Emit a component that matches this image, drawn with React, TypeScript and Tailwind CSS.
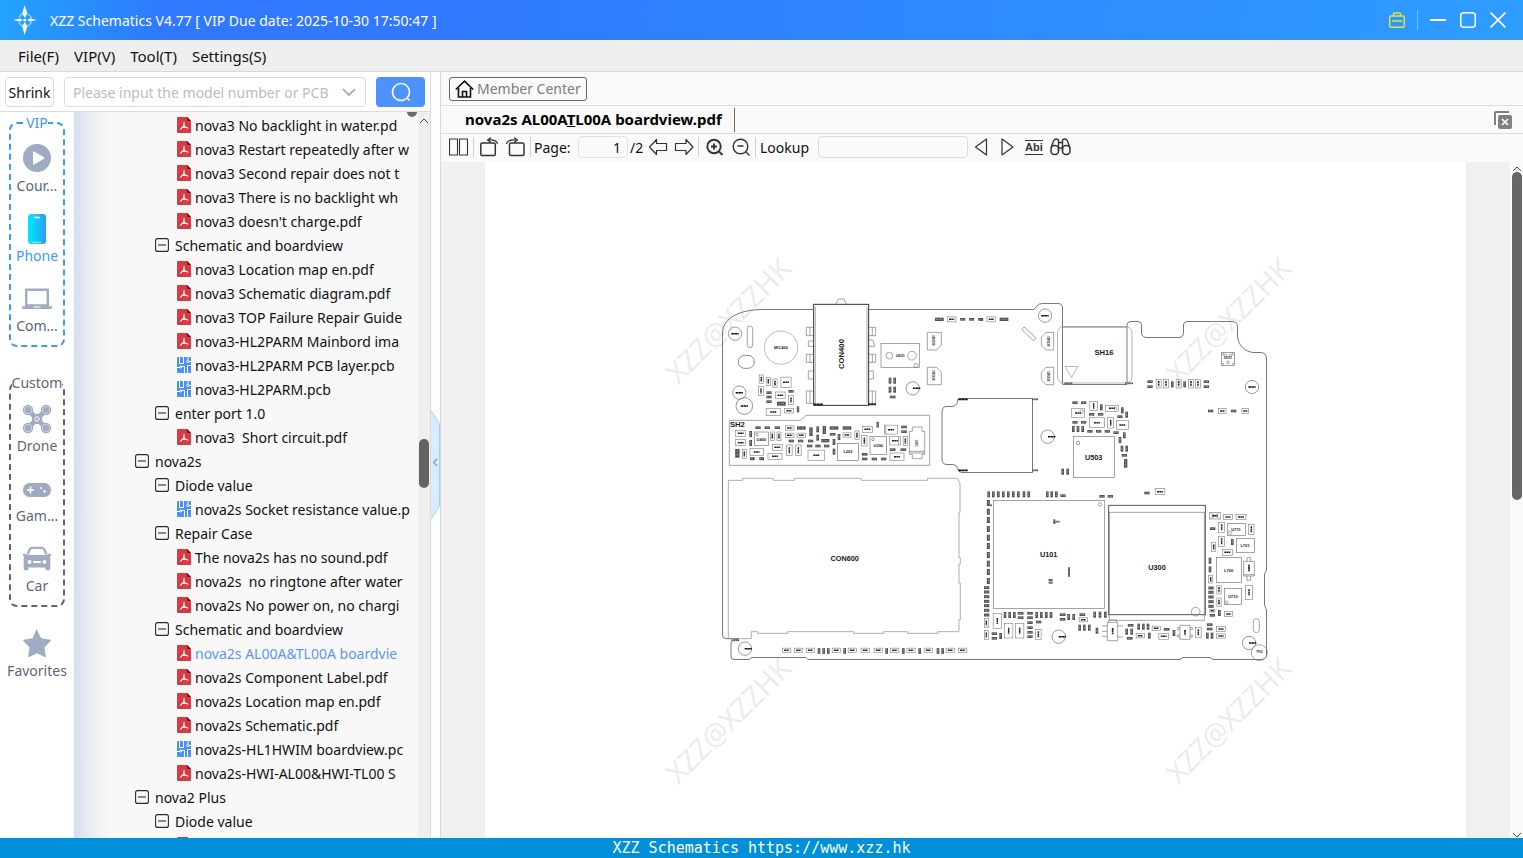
import React from "react";

type Box = [number, number, number, number];

/* ---------- tree data ---------- */

type Row = { kind: "root" | "dir" | "pdf" | "pcb"; text: string; active?: boolean };

const rows: Row[] = [
  { kind: "pdf", text: "nova3 No backlight in water.pd" },
  { kind: "pdf", text: "nova3 Restart repeatedly after w" },
  { kind: "pdf", text: "nova3 Second repair does not t" },
  { kind: "pdf", text: "nova3 There is no backlight wh" },
  { kind: "pdf", text: "nova3 doesn't charge.pdf" },
  { kind: "dir", text: "Schematic and boardview" },
  { kind: "pdf", text: "nova3 Location map en.pdf" },
  { kind: "pdf", text: "nova3 Schematic diagram.pdf" },
  { kind: "pdf", text: "nova3 TOP Failure Repair Guide" },
  { kind: "pdf", text: "nova3-HL2PARM Mainbord ima" },
  { kind: "pcb", text: "nova3-HL2PARM PCB layer.pcb" },
  { kind: "pcb", text: "nova3-HL2PARM.pcb" },
  { kind: "dir", text: "enter port 1.0" },
  { kind: "pdf", text: "nova3  Short circuit.pdf" },
  { kind: "root", text: "nova2s" },
  { kind: "dir", text: "Diode value" },
  { kind: "pcb", text: "nova2s Socket resistance value.p" },
  { kind: "dir", text: "Repair Case" },
  { kind: "pdf", text: "The nova2s has no sound.pdf" },
  { kind: "pdf", text: "nova2s  no ringtone after water" },
  { kind: "pdf", text: "nova2s No power on, no chargi" },
  { kind: "dir", text: "Schematic and boardview" },
  { kind: "pdf", text: "nova2s AL00A&TL00A boardvie", active: true },
  { kind: "pdf", text: "nova2s Component Label.pdf" },
  { kind: "pdf", text: "nova2s Location map en.pdf" },
  { kind: "pdf", text: "nova2s Schematic.pdf" },
  { kind: "pcb", text: "nova2s-HL1HWIM boardview.pc" },
  { kind: "pdf", text: "nova2s-HWI-AL00&HWI-TL00 S" },
  { kind: "root", text: "nova2 Plus" },
  { kind: "dir", text: "Diode value" },
  { kind: "pdf", text: "" },
];

function MinusBox() {
  return (
    <svg width="14" height="14" viewBox="0 0 14 14" fill="none" stroke="#2b2b2b" className="shrink-0">
      <rect x="0.6" y="0.6" width="12.8" height="12.8" rx="2" strokeWidth="1.1" />
      <path d="M3 7H11" strokeWidth="1.1" />
    </svg>
  );
}

function PdfIcon() {
  return (
    <svg width="14" height="16" viewBox="0 0 14 16" className="shrink-0">
      <path d="M1 0H10L14 4V15A1 1 0 0 1 13 16H1A1 1 0 0 1 0 15V1A1 1 0 0 1 1 0Z" fill="#d63a42" />
      <path d="M10 0V3A1 1 0 0 0 11 4H14Z" fill="#7d0d12" />
      <path d="M7 5.2C7.6 8 7 9.6 3.6 12.2M7.2 8.6C8 9.8 9 10.6 10.6 11M4.6 10.8C6.4 10.2 8 10 10.8 10.8" fill="none" stroke="#fff" strokeWidth="1.1" strokeLinecap="round" />
    </svg>
  );
}

function PcbIcon() {
  return (
    <svg width="14" height="16" viewBox="0 0 14 16" className="shrink-0">
      <rect width="14" height="16" rx="1" fill="#4a90f5" />
      <g fill="none" stroke="#fff" strokeWidth="1">
        <path d="M2.500 0V6.500H6.500V0M11 3.500V0M12 4.500H14M0 10.500H3M4.500 9.500H7.500V16M10.500 16V8.500H14" />
        <circle cx="3.700" cy="10" r="1" />
        <circle cx="10.800" cy="4.500" r="1.100" />
      </g>
    </svg>
  );
}

function TreeRow({ row }: { row: Row }) {
  const file = row.kind === "pdf" || row.kind === "pcb";
  const pad = row.kind === "root" ? "pl-[61px] gap-1.5" : row.kind === "dir" ? "pl-[81px] gap-1.5" : "pl-[103px] gap-1";
  return (
    <li>
      <button type="button" className={"flex h-6 w-full items-center whitespace-pre text-left " + pad + (row.active ? " text-[#5b97f5]" : " text-[#111]")}>
        {file ? row.kind === "pdf" ? <PdfIcon /> : <PcbIcon /> : <MinusBox />}
        <span>{row.text}</span>
      </button>
    </li>
  );
}

/* ---------- category bar ---------- */

const navIcons: Record<string, React.ReactNode> = {
  course: (
    <>
      <circle cx="14" cy="14" r="14" fill="#a0aac0" />
      <path d="M10 8.2V19.8A0.8 0.8 0 0 0 11.2 20.4L21 14.7A0.8 0.8 0 0 0 21 13.3L11.2 7.6A0.8 0.8 0 0 0 10 8.2Z" fill="#fff" />
    </>
  ),
  phone: (
    <>
      <defs>
        <linearGradient id="phoneFill" x1="0" x2="1" y1="0" y2="0">
          <stop offset="0" stopColor="#00eaff" />
          <stop offset="1" stopColor="#2a9bfa" />
        </linearGradient>
      </defs>
      <rect x="5" y="0" width="18" height="30" rx="3" fill="url(#phoneFill)" />
      <path d="M11.5 3.5H16.5" stroke="#fff" strokeWidth="1.4" strokeLinecap="round" />
      <path d="M9.5 28.3H18.5" stroke="#bdeaff" strokeWidth="1" />
    </>
  ),
  computer: (
    <>
      <path d="M3.2 5.8H24.8V21.5H3.2Z" fill="none" stroke="#a0aac0" strokeWidth="2.4" strokeLinejoin="round" />
      <path d="M-1 22.2H29V23.4A1.6 1.6 0 0 1 27.4 25H0.6A1.6 1.6 0 0 1 -1 23.4Z" fill="#a0aac0" />
      <path d="M10.5 23H17.5" stroke="#fff" strokeWidth="1" />
    </>
  ),
  drone: (
    <>
      <path d="M6 7L22 23M22 7L6 23" stroke="#a0aac0" strokeWidth="4.6" />
      <rect x="9" y="10" width="10" height="10" rx="3" fill="#a0aac0" />
      {[[5, 6], [23, 6], [5, 24], [23, 24]].map(([x, y]) => (
        <g key={x + "-" + y}>
          <circle cx={x} cy={y} r="5.2" fill="#a0aac0" />
          <circle cx={x} cy={y} r="3.7" fill="none" stroke="#dde1ea" strokeWidth="0.7" />
        </g>
      ))}
      <circle cx="14" cy="15" r="2.2" fill="none" stroke="#fff" strokeWidth="1" />
    </>
  ),
  game: (
    <>
      <rect x="0" y="9" width="28" height="14" rx="6.5" fill="#a0aac0" />
      <path d="M7.5 12.5V19.5M4 16H11" stroke="#fff" strokeWidth="1.6" />
      <circle cx="18.2" cy="14" r="1" fill="#fff" />
      <circle cx="21.6" cy="17.4" r="1.2" fill="#fff" />
    </>
  ),
  car: (
    <g transform="translate(0 1)">
      <path d="M4.5 9.5L6.7 4.5A3 3 0 0 1 9.4 2.9H18.6A3 3 0 0 1 21.3 4.5L23.5 9.5" fill="none" stroke="#a0aac0" strokeWidth="2.2" />
      <path d="M0 8.7H3L3.6 10H24.4L25 8.7H28V11H26.6Q27.3 12 27.3 14V24A1.2 1.2 0 0 1 26.1 25.2H23.6A1.2 1.2 0 0 1 22.4 24V22.5H5.6V24A1.2 1.2 0 0 1 4.4 25.2H1.9A1.2 1.2 0 0 1 0.7 24V14Q0.7 12 1.4 11H0Z" fill="#a0aac0" />
      <circle cx="6.5" cy="17" r="2" fill="#fff" />
      <circle cx="21.5" cy="17" r="2" fill="#fff" />
      <path d="M11 17H17" stroke="#fff" strokeWidth="2" strokeLinecap="round" />
    </g>
  ),
  star: (
    <path d="M14 1.2L18.2 9.3L27.2 10.7Q28.4 11 27.6 12.1L21.4 18.5L22.8 27Q22.8 28.4 21.6 28L14 24.2L6.4 28Q5.2 28.4 5.2 27L6.6 18.5L0.4 12.1Q-0.4 11 0.8 10.7L9.8 9.3L13 1.2Q14 -0.4 15 1.2Z" fill="#a0aac0" />
  ),
};

function NavItem({ icon, label, active }: { icon: string; label: string; active?: boolean }) {
  return (
    <button type="button" className={"flex flex-col items-center whitespace-nowrap " + (active ? "text-[#3b9cf2]" : "text-[#5b6678]")}>
      <svg width="28" height="28" viewBox="0 0 28 28" className="overflow-visible">{navIcons[icon]}</svg>
      <span className="mt-0.5 leading-6">{label}</span>
    </button>
  );
}

/* ---------- board drawing ---------- */

/* Solid parts: centre x, centre y, width, height */
function Solid({ list }: { list: Box[] }) {
  return (
    <g stroke="#505050">
      {list.map(([x, y, w, h], i) =>
        w >= h ? (
          <g key={i}>
            <path d={`M${x - w / 2} ${y}H${x + w / 2}`} strokeWidth={h} />
            <path d={`M${x - w / 2 + 3} ${y}H${x + w / 2 - 3}`} stroke="#d0d0d0" strokeWidth="2.4" strokeDasharray="2 2" />
          </g>
        ) : (
          <g key={i}>
            <path d={`M${x} ${y - h / 2}V${y + h / 2}`} strokeWidth={w} />
            <path d={`M${x} ${y - h / 2 + 3}V${y + h / 2 - 3}`} stroke="#d0d0d0" strokeWidth="2.4" strokeDasharray="2 2" />
          </g>
        )
      )}
    </g>
  );
}

/* Outlined parts with a tiny designator mark inside */
function Open({ list }: { list: Box[] }) {
  return (
    <g fill="none" stroke="#8a8a8a" strokeWidth="2">
      {list.map(([x, y, w, h], i) => {
        const l = Math.min(Math.max(w, h) * 0.3, 9);
        return (
          <g key={i}>
            <rect x={x - w / 2} y={y - h / 2} width={w} height={h} />
            <path d={w >= h ? `M${x - l} ${y}H${x + l}` : `M${x} ${y - l}V${y + l}`} stroke="#222" strokeWidth="4.5" strokeDasharray="6 1" />
          </g>
        );
      })}
    </g>
  );
}

function Hole({ x, y, r, dx = 0 }: { x: number; y: number; r: number; dx?: number }) {
  return (
    <g fill="none" stroke="#666" strokeWidth="2">
      <circle cx={x} cy={y} r={r} />
      <path d={`M${x - 11 + dx} ${y}H${x + 11 + dx}`} stroke="#111" strokeWidth="4.5" strokeDasharray="8 1" />
    </g>
  );
}

function Tag({ x, y, s, children, turn }: { x: number; y: number; s: number; children: string; turn?: boolean }) {
  return (
    <text x={x} y={y} fontSize={s} dominantBaseline="central" textAnchor="middle" transform={turn ? `rotate(-90 ${x} ${y})` : undefined} fill="#1c1c1c" fontWeight="700">
      {children}
    </text>
  );
}

const H = (y: number, xs: number[], w = 17, h = 8): Box[] => xs.map((x) => [x, y, w, h]);
const V = (y: number, xs: number[], w = 8, h = 18): Box[] => xs.map((x) => [x, y, w, h]);
const col = (x: number, ys: number[], w: number, h: number): Box[] => ys.map((y) => [x, y, w, h]);

const solidNW: Box[] = [
  [688, 88, 26, 10], ...H(88, [758, 785, 812], 15),
  ...col(177, [308, 321, 335], 16, 8), [243, 304, 16, 8], [264, 358, 7, 18], [214, 341, 26, 12],
  ...V(272, [540, 554]), ...V(299, [540, 554]), [548, 321, 17, 8],
  ...H(413, [144, 172, 202], 16), ...V(432, [122]), ...V(459, [122]),
  ...H(414, [274, 372, 411], 26, 10), [303, 425, 10, 26], ...V(418, [323]), [343, 420, 10, 24], ...H(433, [368]), ...V(443, [323]),
  ...H(453, [244, 272, 302], 16), [346, 452, 24, 10], ...V(456, [372]), ...H(468, [299, 324, 350], 16), ...V(485, [372]),
  ...V(441, [387]), [503, 404, 7, 17], ...H(411, [582]), ...H(425, [582]), ...H(479, [548, 580]),
  ...H(493, [464]), ...H(507, [464, 493, 521], 16), ...H(506, [127, 155], 14, 9), [82, 490, 13, 26],
];
const openNW: Box[] = [
  [725, 88, 26, 15],
  [154, 268, 13, 26], [175, 274, 13, 24], [195, 280, 13, 26], [228, 277, 31, 31], [153, 303, 14, 26],
  [211, 316, 29, 20], [243, 330, 16, 26], [190, 366, 43, 22], [237, 362, 26, 14],
  [92, 430, 30, 18], [92, 458, 30, 18], [103, 492, 12, 26], [187, 439, 12, 26], [207, 439, 12, 26], [202, 472, 29, 18],
  [140, 486, 40, 22], [195, 499, 42, 18], [239, 414, 26, 13], [239, 436, 26, 13], [274, 436, 26, 13], [238, 481, 17, 32], [265, 481, 17, 32],
  [319, 496, 50, 31], [411, 435, 24, 13], [441, 436, 13, 26], [463, 452, 16, 32], [472, 418, 30, 18],
  [543, 419, 38, 27], [555, 452, 34, 26], [586, 453, 13, 26], [561, 500, 42, 22],
];
const solidNE: Box[] = [
  ...H(88, [4], 10), [72, 88, 26, 10],
  ...H(275, [510, 679], 16), ...H(290, [510, 679], 16), ...V(283, [577, 614]),
  ...H(363, [692, 761], 16),
  ...H(338, [285, 311], 16), ...V(352, [364]), ...V(361, [427]), ...V(374, [440]),
  ...H(373, [335, 362], 16), ...H(380, [420], 16), ...H(397, [285, 311], 16), ...V(417, [280, 294, 308]),
  ...H(424, [330, 356, 382], 16), ...H(428, [408], 16), ...V(436, [433]), ...V(450, [420]), ...V(476, [426, 440]),
  ...H(496, [433], 16), [437, 520, 10, 26], ...V(545, [248, 263]),
  ...H(280, [265, 447], 24, 5), ...H(328, [165], 18, 5), ...H(541, [165], 18, 5),
];
const openNE: Box[] = [
  [34, 88, 26, 15], ...V(281, [536, 558, 596, 633, 654], 15, 26), [727, 363, 22, 15], [796, 363, 20, 15],
  [294, 369, 38, 27], [341, 348, 23, 28], [396, 355, 40, 18], [351, 398, 45, 30], [392, 398, 18, 32], [427, 405, 36, 26],
];
const solidS: Box[] = [
  ...V(543, [327, 341, 355, 404, 530, 580, 629, 684, 698], 8, 17),
  [76, 511, 22, 5],
];
const openS: Box[] = H(541, [230, 266, 301, 379, 427, 466, 505, 554, 603, 655, 721, 758], 25, 13);
const solidSE: Box[] = [
  ...V(43, [26, 40, 55, 70, 85, 100, 115, 132, 146, 202, 215, 229]), ...H(47, [249], 16), ...H(49, [366, 391], 16),
  ...col(25, [69, 95, 120, 147, 173, 198, 225, 251, 276, 303], 9, 18), [30, 76, 12, 5],
  ...col(20, [323, 336, 350, 364, 377, 391, 405], 16, 9),
  ...V(405, [75, 89, 103]), ...H(400, [122, 150]), ...H(413, [122, 150]), ...V(405, [170, 184, 199, 213]),
  ...col(150, [428, 443, 457, 470], 16, 8), ...H(426, [176], 16), ...H(461, [43], 16), ...H(475, [43], 16), ...V(468, [62]),
  ...H(404, [248, 307]), ...H(418, [248]), ...V(411, [266, 281]), ...V(404, [344, 360, 376]),
  ...V(443, [299, 313, 328]), ...V(452, [351]), ...H(436, [452]), ...V(455, [440, 455]), ...H(475, [449]),
  ...V(440, [476, 490, 504]), ...V(467, [508]), ...H(448, [560]), ...V(459, [582]), [223, 125, 6, 14], [231, 125, 16, 5],
  [267, 276, 6, 28], [212, 300, 12, 6], [212, 308, 12, 6], ...H(39, [501], 16),
  ...H(146, [698], 16), ...V(186, [757]), ...V(242, [690]), ...V(268, [690]),
  ...col(693, [324, 337, 351, 365, 379], 16, 9), ...V(399, [718]), ...H(406, [697], 16), ...H(434, [689]), ...H(447, [689]), ...V(467, [682, 696]),
];
const openSE: Box[] = [
  [540, 35, 29, 18], [52, 423, 25, 44], [86, 452, 25, 44], [119, 452, 25, 44], [19, 429, 12, 26], [19, 465, 12, 26], [175, 463, 17, 30],
  [310, 419, 25, 13], [481, 467, 25, 13], [529, 445, 25, 13], [551, 469, 29, 18], [655, 457, 17, 30],
  [705, 107, 32, 20], [744, 111, 26, 15], [783, 111, 30, 15], [725, 142, 18, 30], [725, 184, 18, 30], [814, 148, 16, 30], [742, 217, 30, 18],
  [701, 201, 12, 26], [692, 298, 12, 22], [717, 329, 13, 26], [717, 367, 13, 26], [807, 337, 21, 42], [697, 392, 15, 8], [746, 402, 24, 16],
  [723, 447, 26, 15], [723, 468, 26, 13],
];

const marks: [number, number][] = [[728, 320], [1228, 320], [728, 720], [1228, 720]];

function Board() {
  return (
    <svg width="981" height="676" viewBox="485 162 981 676" className="max-w-full" fontFamily="'Liberation Sans', Arial, sans-serif" role="img" aria-label="Board view">
      <g fill="#ebebec" fontFamily="'Open Sans', sans-serif" fontSize="28.500">
        {marks.map(([x, y]) => (
          <text key={x + "-" + y} x={x} y={y} textAnchor="middle" dominantBaseline="central" transform={`rotate(-45 ${x} ${y})`}>XZZ@XZZHK</text>
        ))}
      </g>

      <g fill="none" stroke="#555" strokeWidth="0.8">
        <path d="M813 309.500H762C742 309.500 722.500 317 722.500 333V635Q722.500 638.700 726 638.700H739L735 640Q731 640 731 643V656Q731 659.500 734 659.500H749L752 657.500H806L808 659.500H1180L1183 657.500H1210L1213 659.500H1261Q1266 659.500 1266.500 655V610L1264.500 605V574L1266.500 570V359Q1266.500 353 1261 352.500H1254C1245 352.500 1237.500 344 1237.500 336V327Q1237.500 321.500 1232 321.500H1187Q1183.500 321.500 1183.500 325V333Q1183.500 337 1179 337.500H1147Q1142 337.500 1141.500 333V325Q1141.500 321.500 1138 321.500H1131Q1127 321.500 1127 325V384M868 309.500H1034L1037 306Q1039 303.500 1042 303.500H1058Q1062.500 303.500 1062.500 308V384" />
        <path d="M1032.5 398.5H960Q957.5 398.5 957.5 401Q957 406 952 406.5H946Q942 407 942 412V459Q942 464.5 947 464.5H953Q957 465 958 469Q958.5 472.5 962 472.5H1032.5Z" />
        <path d="M1062.5 327H1127M1062.5 384.5H1127" />
      </g>
      <g fill="none" stroke="#999" strokeWidth="0.7">
        <rect x="1057.500" y="326.500" width="74.500" height="56.500" rx="6" />
        <path d="M1065 366.500H1078L1071.500 377.500Z" />
      </g>

      <g transform="translate(710 290) scale(0.33333)" strokeWidth="2">
        <g fill="none" stroke="#777">
          <rect x="112" y="108" width="16" height="65" rx="8" />
          <rect x="85" y="196" width="48" height="39" rx="19" stroke="#555" />
          <circle cx="213" cy="173" r="50" stroke="#999" />
          <path d="M378 42L385 27H402L408 42" />
          <path d="M312 112H289V137H312M300 112V137M312 153L295 153V169H312M312 193H289V217H312M300 193V217M312 243H295V267H312M312 303H289V340H312M300 303V340" />
          <path d="M476 112H497V137H476M487 112V137M476 150H488L494 169H476M476 193H497V217H476M487 193V217M476 243H490V267H476M476 303H497V340H476M487 303V340" />
          <rect x="513" y="160" width="115" height="73" />
          <circle cx="538" cy="197" r="10" />
          <circle cx="606" cy="197" r="13" />
          <circle cx="618" cy="226" r="6" />
          <path d="M652 127H694V165L680 180H652ZM652 284V232H680L694 247V284Z" />
          <path d="M58 391H272L288 376H659V526H58Z" />
          <rect x="133" y="426" width="42" height="40" />
          <circle cx="141" cy="434" r="4" />
          <rect x="382" y="460" width="64" height="51" />
          <rect x="480" y="439" width="50" height="54" />
          <circle cx="489" cy="448" r="4" />
          <path d="M527 406V432M566 440V464" />
          <path d="M607 424V411H636V424H644V493H636V506H607V493H598V424ZM598 484H644M598 489H644" />
        </g>
        <rect x="311" y="43" width="165" height="303" fill="none" stroke="#333" strokeWidth="3" />
        <path d="M316 50V340M471 50V340" stroke="#888" />
        <path d="M312 343H338M474 343H498M745 328H774M745 541H774" stroke="#111" strokeWidth="5" strokeDasharray="8 1" />
        <Hole x={75} y={131} r={20} />
        <Hole x={88} y={308} r={20} />
        <Hole x={103} y={348} r={25} />
        <Hole x={608} y={295} r={20} dx={12} />
        <Open list={openNW} />
        <Solid list={solidNW} />
        <Tag x={396} y={192} s={23} turn>CON400</Tag>
        <Tag x={213} y={174} s={12}>MIC400</Tag>
        <Tag x={571} y={198} s={11}>U601</Tag>
        <Tag x={82} y={405} s={23}>SH2</Tag>
        <Tag x={154} y={448} s={12}>U400</Tag>
        <Tag x={414} y={486} s={12}>L202</Tag>
        <Tag x={505} y={468} s={12}>U200</Tag>
        <Tag x={673} y={151} s={8} turn>SCO400</Tag>
        <Tag x={673} y={256} s={8} turn>SCO401</Tag>
        <Tag x={622} y={459} s={9} turn>D401</Tag>
      </g>

      <g transform="translate(980 290) scale(0.33333)" strokeWidth="2">
        <g fill="none" stroke="#777">
          <rect x="122" y="126" width="50" height="11" rx="5" transform="rotate(44 147 131)" />
          <path d="M221 127H198L184 142V165L198 180H221ZM221 284H198L184 269V247L198 232H221Z" />
          <rect x="724" y="187" width="40" height="40" />
          <path d="M724 194H731V187M757 187V194H764M724 220H731V227M757 227V220H764" />
          <circle cx="736" cy="196" r="4" />
          <circle cx="751" cy="196" r="4" />
          <circle cx="744" cy="217" r="4" />
          <rect x="280" y="439" width="124" height="124" />
          <circle cx="294" cy="459" r="5" />
          <circle cx="305" cy="364" r="5" />
          <circle cx="407" cy="356" r="4" />
        </g>
        <Hole x={195} y={77} r={20} />
        <Hole x={816} y={291} r={20} />
        <Hole x={203} y={440} r={20} dx={12} />
        <Open list={openNE} />
        <Solid list={solidNE} />
        <Tag x={372} y={187} s={23}>SH16</Tag>
        <Tag x={341} y={504} s={22}>U503</Tag>
        <Tag x={208} y={154} s={8} turn>SCO402</Tag>
        <Tag x={208} y={259} s={8} turn>SCO403</Tag>
        <Tag x={744} y={207} s={8}>U6001</Tag>
      </g>

      <g transform="translate(710 470) scale(0.33333)" strokeWidth="2">
        <path d="M55 31H98V25H190V31H253V25H454V31H652V25H742L750 40V127H747V263H751V283H747V340H751V448H747V485H683V490H592V485H521V490H431V485H233V490H143V485H124V506H55Z" fill="none" stroke="#888" />
        <Hole x={105} y={536} r={20} dx={10} />
        <Open list={openS} />
        <Solid list={solidS} />
        <Tag x={404} y={266} s={22}>CON600</Tag>
      </g>

      <g transform="translate(980 480) scale(0.33333)" strokeWidth="2">
        <g fill="none" stroke="#777">
          <rect x="40" y="61" width="334" height="325" />
          <circle cx="360" cy="73" r="5" />
          <rect x="386" y="76" width="290" height="328" stroke="#555" strokeWidth="3" />
          <path d="M388 97H673V421H388V97" />
          <circle cx="647" cy="395" r="13" />
          <rect x="742" y="130" width="55" height="37" />
          <circle cx="750" cy="158" r="5" />
          <rect x="769" y="175" width="55" height="42" />
          <rect x="709" y="232" width="75" height="75" />
          <rect x="733" y="325" width="52" height="49" />
          <circle cx="740" cy="367" r="4" />
          <path d="M791 244H823V288H791ZM801 244V233H812V244M801 288V301H812V288M791 284H823" />
          <rect x="820" y="416" width="18" height="42" rx="9" />
          <path d="M382 427H413V482H382ZM366 438H382M366 454H382M366 469H382M413 438H429M413 471H429M386 427V420H410V427" />
          <path d="M600 436H630V478H600ZM600 443H592V449H600M600 465H592V471H600M630 443H637V449H630M630 465H637V471H630" />
          <circle cx="838" cy="518" r="24" />
          <path d="M692 98L718 116M718 98L692 116" />
        </g>
        <path d="M398 444V463M615 450V466M807 254V274" stroke="#222" strokeWidth="5" strokeDasharray="6 1" />
        <Hole x={236} y={470} r={20} dx={11} />
        <Hole x={807} y={489} r={20} dx={11} />
        <Open list={openSE} />
        <Solid list={solidSE} />
        <Tag x={206} y={225} s={22}>U101</Tag>
        <Tag x={531} y={262} s={22}>U300</Tag>
        <Tag x={768} y={149} s={12}>U711</Tag>
        <Tag x={795} y={197} s={12}>L701</Tag>
        <Tag x={746} y={271} s={12}>L700</Tag>
        <Tag x={759} y={350} s={12}>U710</Tag>
        <Tag x={838} y={519} s={8}>TP22</Tag>
      </g>
    </svg>
  );
}

/* ---------- toolbar pieces ---------- */

function ToolButton({ label, w = 20, children }: { label: string; w?: number; children: React.ReactNode }) {
  return (
    <button type="button" aria-label={label} className="shrink-0">
      <svg width={w} height="20" viewBox={`0 0 ${w} 20`} fill="none" stroke="#333" strokeWidth="1.5" strokeLinejoin="round">
        {children}
      </svg>
    </button>
  );
}

const Sep = () => <span className="h-5 w-px shrink-0 bg-[#cfcfcf]" />;

export default function App() {
  return (
    <div className="flex h-screen flex-col overflow-hidden bg-white font-['Noto_Sans','Open_Sans',sans-serif] text-[14px] text-[#111]">
      <header className="flex h-10 shrink-0 items-center bg-[linear-gradient(100deg,#22a4fb_0%,#2f78ff_11%,#2f78ff_30%,#2e9dff_100%)] pr-[17px] pl-3 text-white">
        <svg width="26" height="32" viewBox="0 0 26 32" fill="#fff">
          <circle cx="13" cy="16" r="6.5" fill="none" stroke="#9fd4ff" strokeWidth="1.2" strokeDasharray="6 4.200" strokeDashoffset="-2" />
          <path d="M12.600 1L15.300 9.500L13.300 13.200H12.300L10.200 9.500ZM12.600 31L15.300 22.500L13.300 18.500H12.300L10.200 22.500ZM1 16L8 14.600L10.500 15.700V16.300L8 17.400ZM25 16L18 14.600L15.500 15.700V16.300L18 17.400Z" />
          <circle cx="12.800" cy="16" r="1.600" />
        </svg>
        <h1 className="ml-3 grow whitespace-pre">XZZ Schematics V4.77 [ VIP Due date: 2025-10-30 17:50:47 ]</h1>
        <button type="button" aria-label="Licence">
          <svg width="16" height="16" viewBox="0 0 16 16" fill="none" stroke="#e6e238" strokeWidth="1.4">
            <rect x="0.700" y="4" width="14.600" height="11.300" rx="1.500" />
            <path d="M4.500 4V2A1 1 0 0 1 5.500 1H10.500A1 1 0 0 1 11.500 2V4M3 9H13" />
          </svg>
        </button>
        <span className="mx-3 h-5 w-px bg-[#7fc0ff]" />
        <div className="flex items-center gap-3.5">
          <button type="button" aria-label="Minimise">
            <svg width="16" height="16" viewBox="0 0 16 16" stroke="#fff" strokeWidth="2"><path d="M0 8H16" /></svg>
          </button>
          <button type="button" aria-label="Maximise">
            <svg width="16" height="16" viewBox="0 0 16 16" fill="none" stroke="#fff" strokeWidth="1.500"><rect x="0.750" y="0.750" width="14.500" height="14.500" rx="3" /></svg>
          </button>
          <button type="button" aria-label="Close">
            <svg width="16" height="16" viewBox="0 0 16 16" stroke="#fff" strokeWidth="1.600"><path d="M0.500 0.500L15.500 15.500M15.500 0.500L0.500 15.500" /></svg>
          </button>
        </div>
      </header>

      <nav className="flex h-8 shrink-0 items-center gap-[15px] border-b border-[#d9d9d9] bg-[#efefef] pt-0.5 pl-[18px] text-[15px]">
        <button type="button">File(F)</button>
        <button type="button">VIP(V)</button>
        <button type="button">Tool(T)</button>
        <button type="button">Settings(S)</button>
      </nav>

      <div className="flex min-h-0 grow">
        <aside className="flex w-[431px] shrink-0 flex-col border-r border-[#d9d9d9]">
          <div className="flex h-10 shrink-0 items-center border-b border-[#dcdcdc] pt-px pr-[5px] pl-[5px]">
            <button type="button" className="h-[30px] w-[49px] rounded border border-[#dcdcdc]">Shrink</button>
            <label className="relative ml-2.5 flex h-[30px] min-w-0 grow items-center rounded border border-[#dcdcdc]">
              <input aria-label="Model number or PCB" placeholder="Please input the model number or PCB" className="w-full bg-transparent pr-5 pl-2 outline-none placeholder:text-[#b9bcc2]" />
              <svg width="14" height="10" viewBox="0 0 14 10" fill="none" stroke="#a0a5ae" strokeWidth="1.700" className="absolute right-[9px]"><path d="M1 2L7 8L13 2" /></svg>
            </label>
            <button type="button" aria-label="Search" className="ml-2.5 flex h-[30px] w-[49px] items-center justify-center rounded bg-[#4d92ff]">
              <svg width="20" height="20" viewBox="0 0 20 20" fill="none" stroke="#fff" strokeWidth="1.600"><circle cx="10" cy="10" r="8.500" /><path d="M16 16L18.500 18.500" /></svg>
            </button>
          </div>

          <div className="flex min-h-0 grow">
            <nav className="flex w-[74px] shrink-0 flex-col items-center overflow-hidden">
              <fieldset className="flex w-14 flex-col items-center rounded-lg border-2 border-dashed border-[#3b9cf2]">
                <legend className="mx-auto leading-[22px] text-[#3b9cf2]">VIP</legend>
                <div className="flex flex-col items-center gap-4 pt-2.5 pb-[7px]">
                  <NavItem icon="course" label="Cour..." />
                  <NavItem icon="phone" label="Phone" active />
                  <NavItem icon="computer" label="Com..." />
                </div>
              </fieldset>
              <fieldset className="mt-[25px] flex w-14 flex-col items-center rounded-lg border-2 border-dashed border-[#5b6678]">
                <legend className="mx-auto leading-[22px] text-[#5b6678]">Custom</legend>
                <div className="flex flex-col items-center gap-4 pt-2.5 pb-[7px]">
                  <NavItem icon="drone" label="Drone" />
                  <NavItem icon="game" label="Gam..." />
                  <NavItem icon="car" label="Car" />
                </div>
              </fieldset>
              <div className="mt-[22px]">
                <NavItem icon="star" label="Favorites" />
              </div>
            </nav>

            <div className="relative flex min-w-0 grow bg-[linear-gradient(90deg,#d5dff0_0px,#eceef2_18px,#f8f8f8_36px)]">
              <ul className="min-w-0 grow overflow-hidden pt-px">
                {rows.map((r, i) => (
                  <TreeRow key={i} row={r} />
                ))}
              </ul>
              <span className="absolute top-0 right-[13px] h-[5px] w-2.5 rounded-b-full bg-[#6b6b6b]" />
              <div className="flex w-3 shrink-0 flex-col items-center bg-[#efefef]">
                <svg width="10" height="6" viewBox="0 0 10 6" fill="none" stroke="#444" className="mt-1.5"><path d="M1 5L5 1L9 5" /></svg>
                <span className="mt-[315px] h-[49px] w-2.5 rounded-full bg-[#636363]" />
              </div>
            </div>
          </div>
        </aside>

        <div className="flex w-2.5 shrink-0 items-start border-r border-[#d9d9d9] bg-[#fafffa]">
          <button type="button" aria-label="Collapse panel" className="mt-[338px]">
            <svg width="9" height="110" viewBox="0 0 9 110" fill="#d9ebff" stroke="#a9d1f6">
              <path d="M0 0.500L8.500 14V96L0 109.500" />
              <path d="M6 49L2.500 52.500L6 56" fill="none" stroke="#5aa7e8" strokeWidth="1.200" />
            </svg>
          </button>
        </div>

        <main className="flex min-w-0 grow flex-col bg-[#fafafa]">
          <div className="flex h-[34px] shrink-0 items-center border-b border-[#dcdcdc] pl-2">
            <button type="button" className="flex h-6 items-center gap-[3px] rounded-[3px] border border-[#666] px-[5px] text-[#7a7a7a]">
              <svg width="19" height="18" viewBox="0 0 19 18" fill="none" stroke="#111" strokeWidth="1.600"><path d="M0.800 9.500L9.500 1.200L18.200 9.500M3.500 8V17H15.500V8M7.500 17V11.500H11.500V17" /></svg>
              Member Center
            </button>
          </div>
          <div className="flex h-7 shrink-0 items-center border-b border-[#dcdcdc] pr-[11px] pl-6">
            <button type="button" className="text-[15px] font-bold text-black">nova2s AL00A<span className="underline">T</span>L00A boardview.pdf</button>
            <span className="ml-3 h-6 w-px bg-[#666]" />
            <button type="button" aria-label="Close all tabs" className="ml-auto">
              <svg width="18" height="18" viewBox="0 0 18 18" fill="none">
                <path d="M1 14V2A1 1 0 0 1 2 1H15" stroke="#808080" strokeWidth="2" />
                <rect x="4" y="4" width="14" height="14" rx="2" fill="#808080" />
                <path d="M8 8L14 14M14 8L8 14" stroke="#fff" strokeWidth="1.700" />
              </svg>
            </button>
          </div>
          <div className="flex h-7 shrink-0 items-center pb-0.5 pl-2">
            <ToolButton label="Two pages"><path d="M0.500 2H8.500V18H0.500ZM10.500 2H18.500V18H10.500Z" strokeWidth="1.100" /></ToolButton>
            <span className="ml-1 flex items-center gap-1.5"><Sep />
              <ToolButton label="Rotate left"><rect x="0.800" y="6" width="14.500" height="12.500" rx="1.500" /><path d="M17.500 7C17 4 13 2.500 8 3M11 0.500L7.500 3L11 5.500" strokeWidth="1.200" /></ToolButton>
              <ToolButton label="Rotate right"><rect x="3.500" y="6" width="14.500" height="12.500" rx="1.500" /><path d="M0.500 7C1 4 5 2.500 10 3M8 0.500L11.500 3L8 5.500" strokeWidth="1.200" /></ToolButton>
            </span>
            <span className="ml-1 flex"><Sep /></span>
            <label htmlFor="page" className="ml-[3px] w-10">Page:</label>
            <input id="page" defaultValue="1" className="ml-1 h-[22px] w-[50px] rounded-sm border border-[#e2e2e2] bg-transparent pr-1.5 text-right outline-none" />
            <span className="ml-0.5 w-[18px]">/2</span>
            <ToolButton label="Previous page"><path d="M1.500 10L8.500 2.500V6.500H18.500V13.500H8.500V17.500Z" strokeWidth="1.200" /></ToolButton>
            <span className="ml-1.5 flex"><ToolButton label="Next page"><path d="M19 10L12 2.500V6.500H1.500V13.500H12V17.500Z" strokeWidth="1.200" /></ToolButton></span>
            <span className="ml-1 flex items-center gap-1.5"><Sep />
              <ToolButton label="Zoom in"><circle cx="9" cy="9.500" r="6.700" strokeWidth="1.900" /><path d="M14 14.500L17.500 18M6 9.500H12M9 6.500V12.500" strokeWidth="1.900" /></ToolButton>
              <ToolButton label="Zoom out"><circle cx="9.500" cy="9.500" r="7.300" strokeWidth="1.400" /><path d="M15 15L18.500 18.500M6.500 9H12.500" strokeWidth="1.400" /></ToolButton>
            </span>
            <span className="ml-1 flex"><Sep /></span>
            <label htmlFor="lookup" className="ml-1 w-[54px]">Lookup</label>
            <input id="lookup" className="ml-1 h-[22px] w-[150px] rounded-sm border border-[#dcdcdc] bg-transparent px-1 outline-none" />
            <span className="ml-1.5 flex items-center gap-1.5">
              <ToolButton label="Find previous"><path d="M1.500 10L12.500 2V18Z" strokeWidth="1.200" /></ToolButton>
              <ToolButton label="Find next"><path d="M13 10L2 2V18Z" strokeWidth="1.200" /></ToolButton>
            </span>
            <button type="button" className="ml-[5px] border-y border-[#333] text-center font-['Liberation_Sans',Arial,sans-serif] text-[11px] leading-[13px] font-bold text-[#333]">Abi</button>
            <span className="ml-[7px] flex">
              <ToolButton label="Find" w={21}>
                <path d="M1 11L3.500 4Q5.500 0.500 8.500 3V14M20 11L17.500 4Q15.500 0.500 12.500 3V14M8.500 5.500H12.500M8.500 11H12.500" strokeWidth="1.400" />
                <rect x="1" y="8.500" width="7.500" height="9" rx="3.500" />
                <rect x="12.500" y="8.500" width="7.500" height="9" rx="3.500" />
              </ToolButton>
            </span>
          </div>
          <div className="flex min-h-0 grow bg-[#f0f0f0] pl-11">
            <div className="flex min-w-0 grow justify-center overflow-hidden bg-white">
              <Board />
            </div>
            <div className="ml-11 flex w-[13px] shrink-0 flex-col items-center bg-[#fafafa]">
              <svg width="10" height="6" viewBox="0 0 10 6" fill="none" stroke="#444" className="mt-1 shrink-0"><path d="M1 5L5 1L9 5" /></svg>
              <span className="h-[328px] w-2.5 shrink-0 rounded-full bg-[#666]" />
              <svg width="10" height="6" viewBox="0 0 10 6" fill="none" stroke="#444" className="mt-auto shrink-0"><path d="M1 1L5 5L9 1" /></svg>
            </div>
          </div>
        </main>
      </div>

      <footer className="flex h-5 shrink-0 items-center justify-center bg-[#0090d9] font-['DejaVu_Sans_Mono',monospace] text-[15px] text-white">
        XZZ Schematics https://www.xzz.hk
      </footer>
    </div>
  );
}
